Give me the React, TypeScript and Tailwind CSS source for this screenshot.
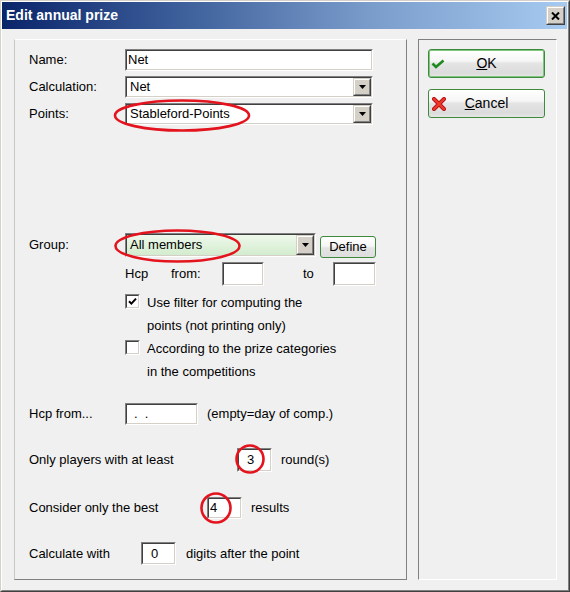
import React from "react";

function Sunken({
  className = "",
  innerClass = "",
  children,
}: {
  className?: string;
  innerClass?: string;
  children?: React.ReactNode;
}) {
  return (
    <div
      className={`border border-t-[#808080] border-l-[#808080] border-r-white border-b-white ${className}`}
    >
      <div
        className={`h-full w-full border border-t-[#404040] border-l-[#404040] border-r-[#d4d0c8] border-b-[#d4d0c8] ${innerClass}`}
      >
        {children}
      </div>
    </div>
  );
}

function Raised({
  className = "",
  innerClass = "",
  children,
}: {
  className?: string;
  innerClass?: string;
  children?: React.ReactNode;
}) {
  return (
    <div
      className={`border border-t-[#d4d0c8] border-l-[#d4d0c8] border-r-[#404040] border-b-[#404040] bg-[#d4d0c8] ${className}`}
    >
      <div
        className={`h-full w-full border border-t-white border-l-white border-r-[#808080] border-b-[#808080] flex items-center justify-center ${innerClass}`}
      >
        {children}
      </div>
    </div>
  );
}

function Arrow() {
  return (
    <Raised className="w-[18px] h-full shrink-0">
      <svg width="7" height="4" viewBox="0 0 7 4">
        <path d="M0 0 H7 L3.5 4 Z" fill="#000" />
      </svg>
    </Raised>
  );
}

function Select({
  text,
  className = "",
  bg = "bg-white",
}: {
  text: string;
  className?: string;
  bg?: string;
}) {
  return (
    <Sunken className={className} innerClass={`flex items-stretch ${bg}`}>
      <div className="flex-1 flex items-center pl-[3px]">{text}</div>
      <Arrow />
    </Sunken>
  );
}

function Check({ checked }: { checked?: boolean }) {
  return (
    <Sunken className="w-[15px] h-[15px] mt-[3px] shrink-0" innerClass="bg-white flex items-center justify-center">
      {checked && (
        <svg width="9" height="9" viewBox="0 0 9 9">
          <path d="M1 4.2 L3.4 6.6 L8 1.6" stroke="#000" strokeWidth="2" fill="none" />
        </svg>
      )}
    </Sunken>
  );
}

function DlgButton({
  children,
  icon,
  isDefault,
}: {
  children: React.ReactNode;
  icon: React.ReactNode;
  isDefault?: boolean;
}) {
  return (
    <div
      className={`relative w-[117px] h-[29px] rounded-[3px] border border-[#3d8a3d] bg-[linear-gradient(to_bottom,#ffffff_0%,#f6f6f6_40%,#e4e4e4_50%,#dcdcdc_85%,#e6e6e6_100%)] flex items-center justify-center text-[14px] ${
        isDefault ? "shadow-[inset_0_0_0_1px_#7fc77f]" : ""
      }`}
    >
      <div className="absolute left-[2px] top-0 h-full flex items-center">{icon}</div>
      <span>{children}</span>
    </div>
  );
}

export default function App() {
  return (
    <div className="relative w-[570px] h-[592px] overflow-hidden font-['Liberation_Sans',Arial,sans-serif] text-[13px] text-black border border-t-[#d4d0c8] border-l-[#d4d0c8] border-r-[#404040] border-b-[#404040]">
      <div className="w-full h-full flex flex-col bg-[#f0f0f0] border border-t-white border-l-white border-r-[#808080] border-b-[#808080]">
        {/* Title bar */}
        <div className="h-[27px] mr-[1px] flex items-center justify-between bg-[linear-gradient(to_right,#0a246a,#3a5c98_30%,#7a9ccb_65%,#a6caf0)]">
          <span className="pl-[4px] text-white font-bold text-[14px]">Edit annual prize</span>
          <Raised className="w-[19px] h-[19px] mr-[2px]">
            <svg width="9" height="8" viewBox="0 0 9 8">
              <path d="M1 0.5 L8 7.5 M8 0.5 L1 7.5" stroke="#000" strokeWidth="2" />
            </svg>
          </Raised>
        </div>

        {/* Body */}
        <div className="flex pl-[12px] pt-[10px] gap-[11px]">
          {/* Left panel */}
          <div className="w-[393px] h-[541px] border border-t-white border-l-[#c8c8c8] border-r-[#808080] border-b-[#808080] flex flex-col pl-[14px] pt-[9px]">
            <div className="flex items-center h-[22px]">
              <span className="w-[96px]">Name:</span>
              <Sunken className="w-[248px] h-[22px]" innerClass="bg-white flex items-center pl-[1px]">
                Net
              </Sunken>
            </div>
            <div className="flex items-center h-[22px] mt-[5px]">
              <span className="w-[96px]">Calculation:</span>
              <Select text="Net" className="w-[248px] h-[22px]" />
            </div>
            <div className="flex items-center h-[22px] mt-[5px]">
              <span className="w-[96px]">Points:</span>
              <Select text="Stableford-Points" className="w-[248px] h-[22px]" />
            </div>

            <div className="flex items-start h-[25px] mt-[108px]">
              <span className="w-[96px] h-[24px] flex items-center">Group:</span>
              <Select
                text="All members"
                className="w-[191px] h-[24px]"
                bg="bg-[linear-gradient(to_bottom,#eef8ec,#d3ecce)]"
              />
              <div className="ml-[4px] mt-[3px] w-[56px] h-[22px] rounded-[3px] border border-[#3d8a3d] bg-[linear-gradient(to_bottom,#ffffff_0%,#f6f6f6_45%,#e4e4e4_55%,#dedede_100%)] flex items-center justify-center">
                Define
              </div>
            </div>

            <div className="flex items-center h-[24px] mt-[4px] ml-[96px]">
              <span className="w-[46px]">Hcp</span>
              <span className="w-[51px]">from:</span>
              <Sunken className="w-[42px] h-[24px]" innerClass="bg-white" />
              <span className="ml-[39px] w-[30px]">to</span>
              <Sunken className="w-[43px] h-[24px]" innerClass="bg-white" />
            </div>

            <div className="flex items-start mt-[5px] ml-[96px]">
              <Check checked />
              <div className="ml-[7px] leading-[23px]">
                Use filter for computing the
                <br />
                points (not printing only)
              </div>
            </div>
            <div className="flex items-start ml-[96px]">
              <Check />
              <div className="ml-[7px] leading-[23px]">
                According to the prize categories
                <br />
                in the competitions
              </div>
            </div>

            <div className="flex items-center h-[22px] mt-[20px]">
              <span className="w-[96px]">Hcp from...</span>
              <Sunken className="w-[73px] h-[22px]" innerClass="bg-white flex items-center pl-[7px] whitespace-pre">
                {".  ."}
              </Sunken>
              <span className="ml-[9px]">(empty=day of comp.)</span>
            </div>

            <div className="flex items-center h-[24px] mt-[23px]">
              <span className="w-[208px]">Only players with at least</span>
              <Sunken className="w-[35px] h-[24px]" innerClass="bg-white flex items-center pl-[8px]">
                3
              </Sunken>
              <span className="ml-[9px]">round(s)</span>
            </div>

            <div className="flex items-center h-[22px] mt-[25px]">
              <span className="w-[178px]">Consider only the best</span>
              <Sunken className="w-[35px] h-[22px]" innerClass="bg-white flex items-center pl-[1px]">
                4
              </Sunken>
              <span className="ml-[9px]">results</span>
            </div>

            <div className="flex items-center h-[23px] mt-[23px]">
              <span className="w-[112px]">Calculate with</span>
              <Sunken className="w-[35px] h-[23px]" innerClass="bg-white flex items-center pl-[8px]">
                0
              </Sunken>
              <span className="ml-[10px]">digits after the point</span>
            </div>
          </div>

          {/* Right panel */}
          <div className="w-[139px] h-[541px] border border-t-[#808080] border-l-[#808080] border-r-white border-b-white flex flex-col pl-[9px] pt-[9px] gap-[11px]">
            <DlgButton
              isDefault
              icon={
                <svg width="14" height="10" viewBox="0 0 14 10">
                  <path d="M1.5 4.5 L5 8 L12.5 1.5" stroke="#1f8a1f" strokeWidth="2.6" fill="none" />
                </svg>
              }
            >
              <span className="underline">O</span>K
            </DlgButton>
            <DlgButton
              icon={
                <svg width="14" height="14" viewBox="0 0 14 14" className="ml-[1px]">
                  <path d="M2 2 L12 12 M12 2 L2 12" stroke="#b01010" strokeWidth="4" strokeLinecap="round" />
                  <path d="M2 2 L12 12 M12 2 L2 12" stroke="#f0382a" strokeWidth="2.4" strokeLinecap="round" />
                </svg>
              }
            >
              <span className="underline">C</span>ancel
            </DlgButton>
          </div>
        </div>
      </div>

      {/* Red annotation ellipses */}
      <svg className="absolute inset-0 pointer-events-none" width="570" height="592">
        <g fill="none" stroke="#e3141e" strokeWidth="2.6">
          <ellipse cx="181" cy="114.5" rx="67" ry="15" />
          <ellipse cx="176.5" cy="245" rx="62" ry="15.5" />
          <ellipse cx="249" cy="458" rx="13.5" ry="13.5" />
          <ellipse cx="215" cy="507" rx="14.5" ry="14.5" />
        </g>
      </svg>
    </div>
  );
}
